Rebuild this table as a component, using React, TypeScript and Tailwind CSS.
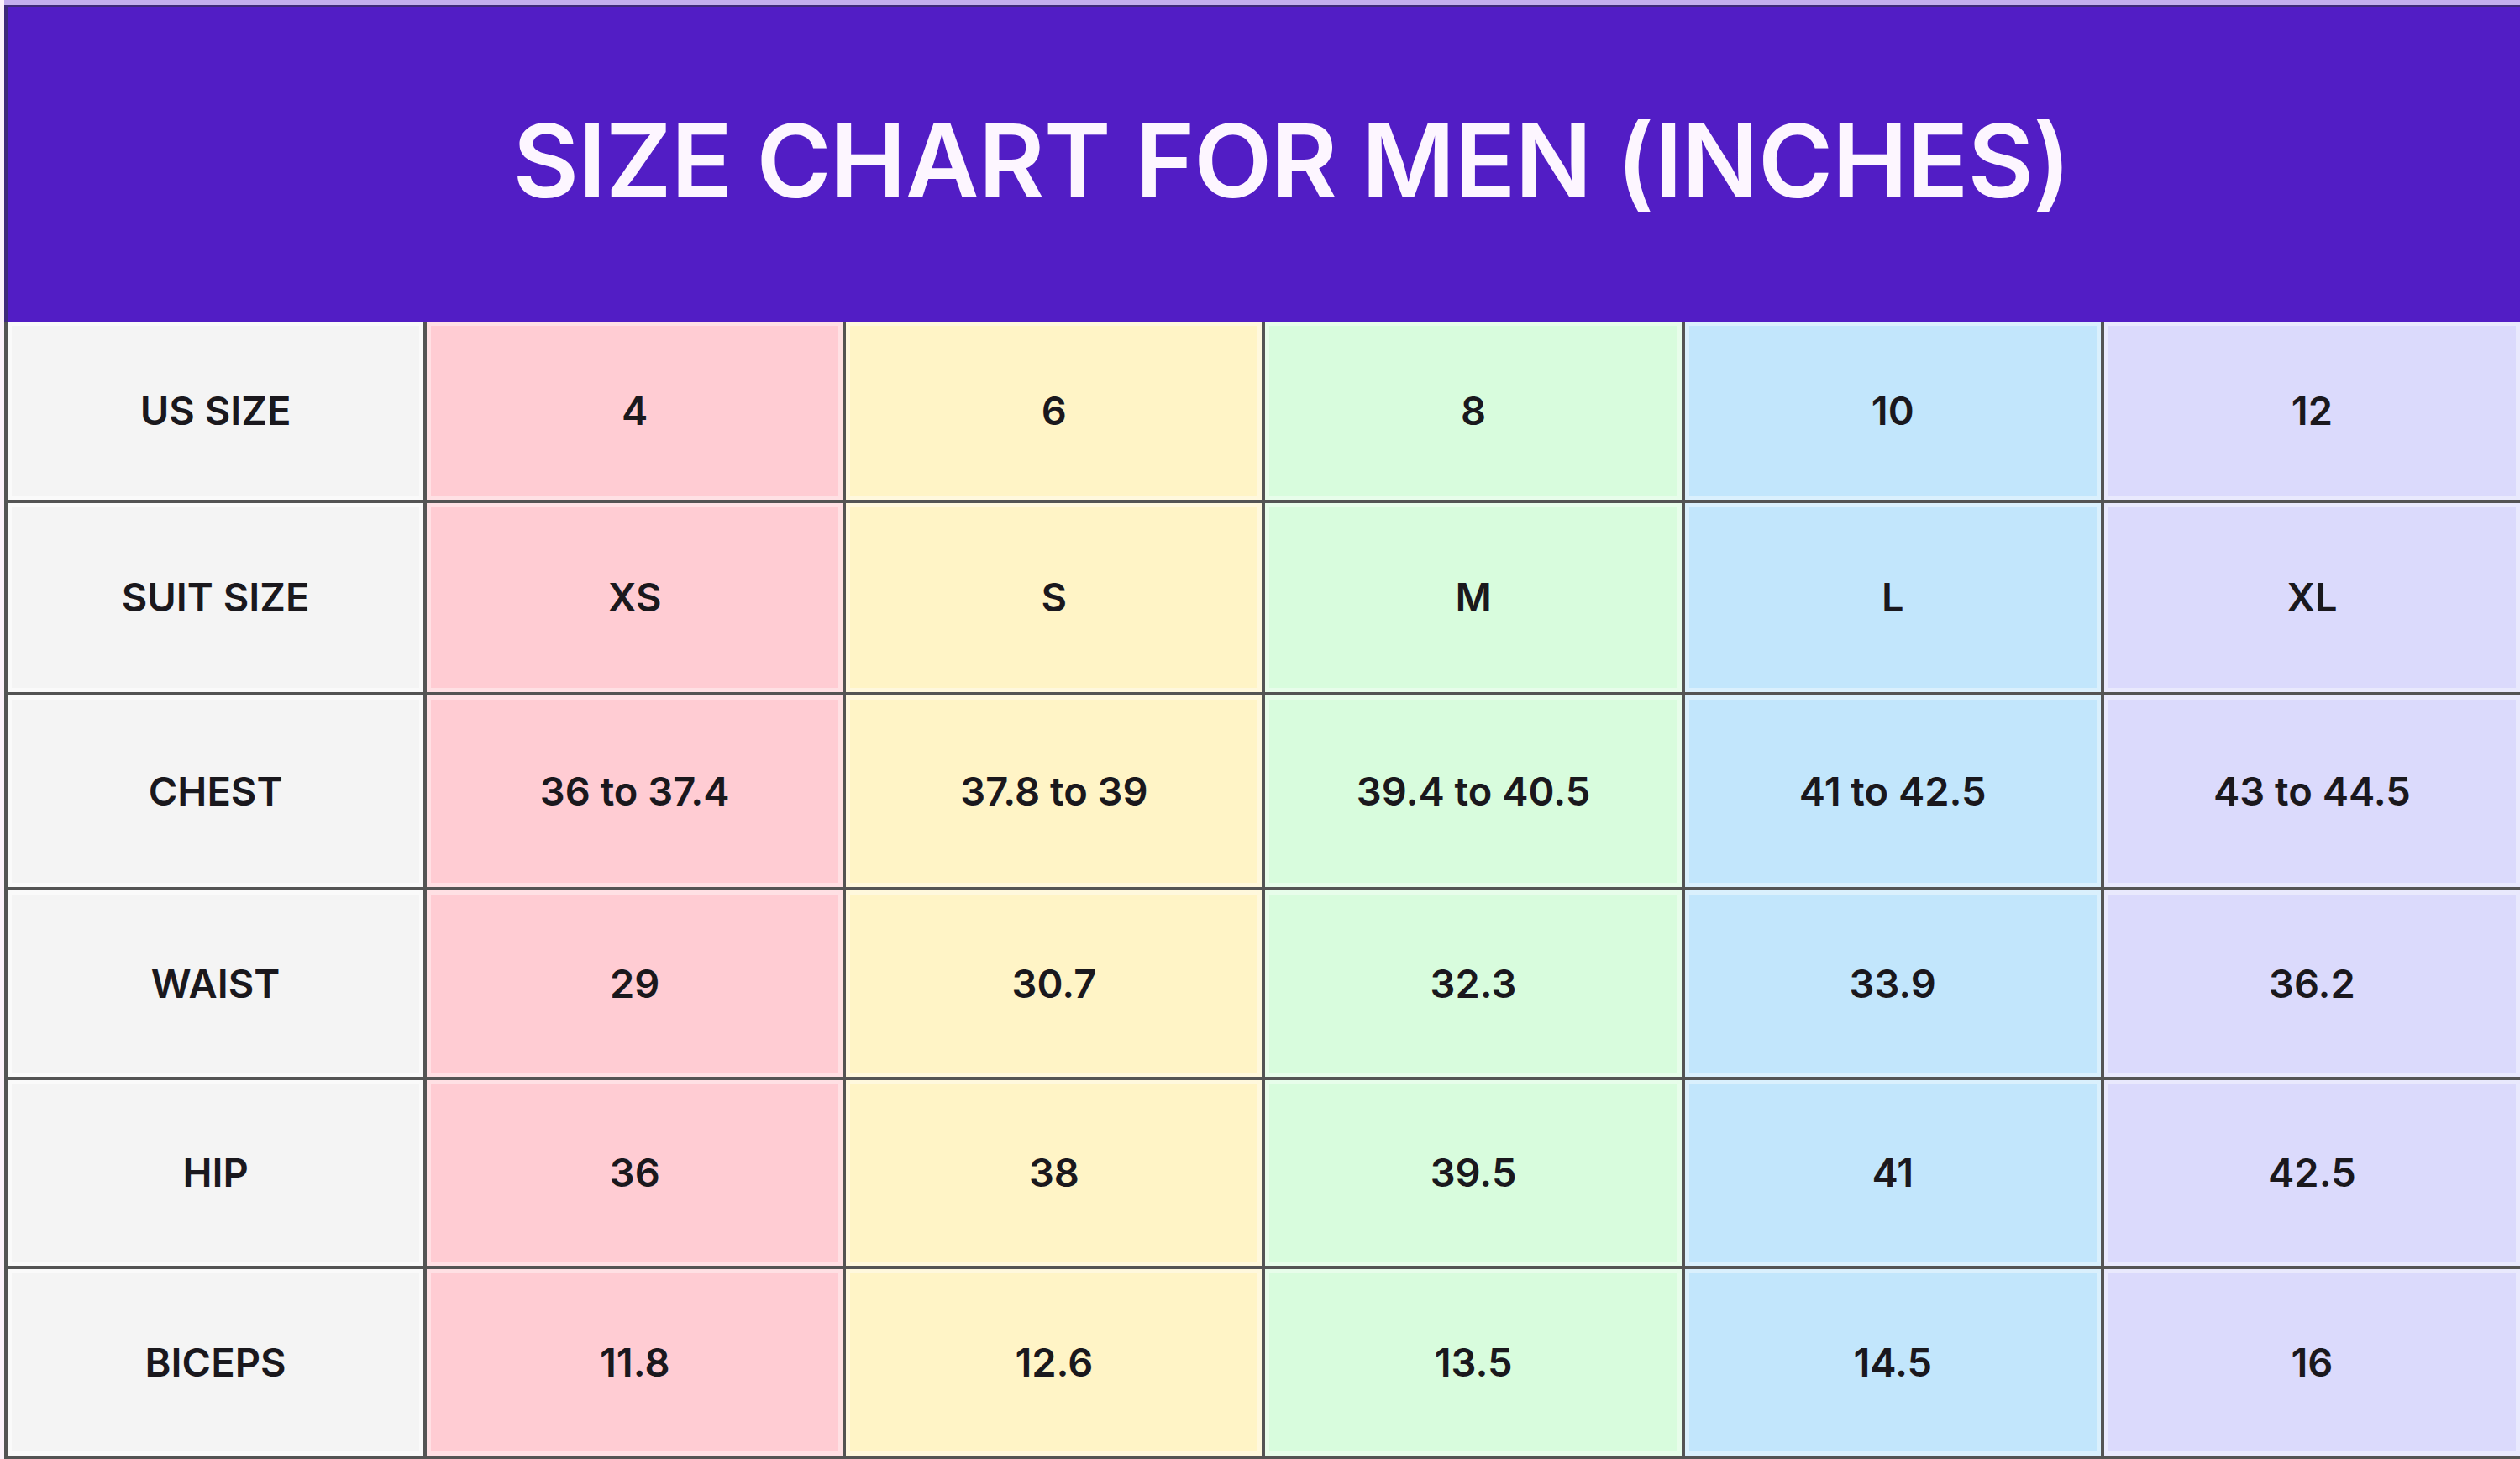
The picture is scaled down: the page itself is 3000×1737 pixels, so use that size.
const columns = [
  { bg: "bg-[#ffccd3]", values: ["4", "XS", "36 to 37.4", "29", "36", "11.8"] },
  { bg: "bg-[#fff4c6]", values: ["6", "S", "37.8 to 39", "30.7", "38", "12.6"] },
  { bg: "bg-[#d8fcdd]", values: ["8", "M", "39.4 to 40.5", "32.3", "39.5", "13.5"] },
  { bg: "bg-[#c2e6fc]", values: ["10", "L", "41 to 42.5", "33.9", "41", "14.5"] },
  { bg: "bg-[#dbdafc]", values: ["12", "XL", "43 to 44.5", "36.2", "42.5", "16"] },
];

const labels = ["US SIZE", "SUIT SIZE", "CHEST", "WAIST", "HIP", "BICEPS"];

const rowHeights = ["h-[212px]", "h-[225px]", "h-[228px]", "h-[222px]", "h-[221px]", "h-[222px]"];

function Cell({ bg, text }: { bg: string; text: string }) {
  return (
    <div
      className={`${bg} flex items-center justify-center shadow-[inset_0_0_0_5px_rgba(255,255,255,0.4)] text-[47px] font-semibold text-[#1a181d]`}
    >
      {text}
    </div>
  );
}

export default function App() {
  return (
    <div className="w-[3000px] h-[1737px] overflow-hidden bg-[#fdf2fb] pl-[5px] font-['Inter','Liberation_Sans',sans-serif]">
      <div className="h-[6px] bg-[#c4aeee]" />
      <div className="flex h-[377px] items-center justify-center border-l-4 border-t-2 border-[#3f2a7a] bg-[#521dc5] pl-[66px]">
        <h1 className="pb-[8px] text-[121px] font-semibold leading-none tracking-[-1px] text-[#fdf6ff]">
          SIZE CHART FOR MEN (INCHES)
        </h1>
      </div>
      <div className="grid grid-cols-6 gap-[4px] border-b-4 border-l-4 border-[#545454] bg-[#545454]">
        {labels.map((label, r) => (
          <div key={label} className="contents">
            <div
              className={`${rowHeights[r]} flex items-center justify-center bg-[#f4f4f4] shadow-[inset_0_0_0_5px_rgba(255,255,255,0.5)] text-[47px] font-semibold text-[#1a181d]`}
            >
              {label}
            </div>
            {columns.map((col) => (
              <Cell key={col.bg} bg={col.bg} text={col.values[r]} />
            ))}
          </div>
        ))}
      </div>
    </div>
  );
}
